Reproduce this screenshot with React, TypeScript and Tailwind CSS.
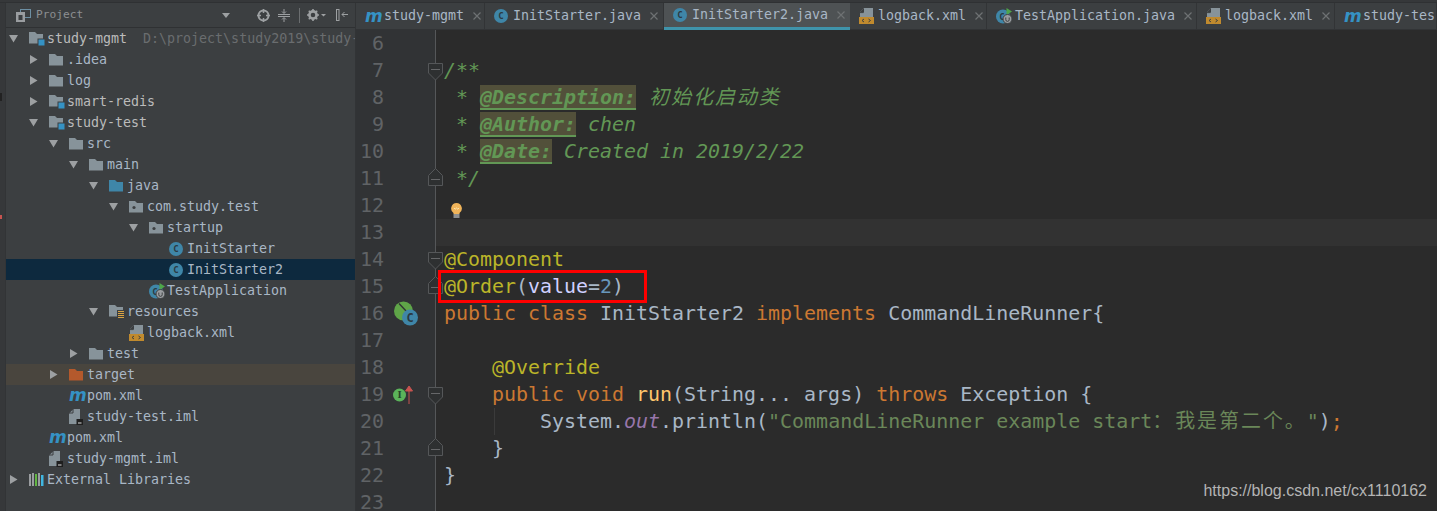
import React from "react";

const mono = "font-['DejaVu_Sans_Mono','Noto_Sans_CJK_SC',monospace]";

const Folder = ({ color = "#87939a" }: { color?: string }) => (
  <svg width="14" height="12" viewBox="0 0 14 12" className="block">
    <path d="M0 0h6l2 2h6v9.5H0z" fill={color} />
  </svg>
);

const ModuleFolder = () => (
  <svg width="16" height="15" viewBox="0 0 16 15" className="block">
    <path d="M0 1h6l2 2h6v9.5H0z" fill="#87939a" />
    <rect x="8.5" y="7.5" width="7.5" height="7.5" fill="#3c3f41" />
    <rect x="9.5" y="8.5" width="6" height="6" fill="#3592c4" />
  </svg>
);

const PackageFolder = () => (
  <svg width="14" height="12" viewBox="0 0 14 12" className="block">
    <path d="M0 0h6l2 2h6v9.5H0z" fill="#87939a" />
    <circle cx="5" cy="6.5" r="1.6" fill="#3c3f41" />
  </svg>
);

const ResourceFolder = () => (
  <svg width="16" height="15" viewBox="0 0 16 15" className="block">
    <path d="M0 1h6l2 2h6v9.5H0z" fill="#87939a" />
    <rect x="8" y="6" width="8" height="9" fill="#3c3f41" />
    <path d="M9 7.5h6M9 9.5h6M9 11.5h6M9 13.5h6" stroke="#d9a343" strokeWidth="1" />
  </svg>
);

const ClassIcon = ({ size = 14 }: { size?: number }) => (
  <svg width={size} height={size} viewBox="0 0 14 14" className="block">
    <circle cx="7" cy="7" r="7" fill="#3f86a8" />
    <text x="7" y="10.2" textAnchor="middle" fontSize="9" fontWeight="700" fontFamily="DejaVu Sans Mono" fill="#2b3a42">
      C
    </text>
  </svg>
);

const SpringIcon = () => (
  <svg width="17" height="16" viewBox="0 0 17 16" className="block">
    <circle cx="7" cy="8.5" r="7" fill="#3f86a8" />
    <text x="6" y="12" textAnchor="middle" fontSize="9" fontWeight="700" fontFamily="DejaVu Sans Mono" fill="#2b3a42">
      C
    </text>
    <path d="M10.5 0l5.5 3.5-5.5 3.5z" fill="#4ea64a" />
    <circle cx="11.5" cy="11" r="4.5" fill="#9a9da0" stroke="#3c3f41" />
    <path d="M9.8 9.5v2.2a1.7 1.7 0 0 0 3.4 0V9.5" fill="none" stroke="#3c3f41" strokeWidth="1" />
  </svg>
);

const XmlIcon = () => (
  <svg width="16" height="16" viewBox="0 0 16 16" className="block">
    <path d="M5 0h9v9H1V4z" fill="#87939a" />
    <path d="M5 0v4H1z" fill="#3c3f41" />
    <path d="M1 4.6l3.4 0V1" fill="none" stroke="#3c3f41" strokeWidth="1" />
    <rect x="0" y="9" width="15" height="7" fill="#c08a2e" />
    <path d="M5 11l-2 1.5L5 14M9.5 11l2 1.5-2 1.5" fill="none" stroke="#3c3f41" strokeWidth="1" />
  </svg>
);

const ImlIcon = () => (
  <svg width="14" height="16" viewBox="0 0 14 16" className="block">
    <path d="M4.5 0H11v15H0V4.5z" fill="#87939a" />
    <path d="M4 0v4H0" fill="none" stroke="#3c3f41" strokeWidth="1" />
    <rect x="7.5" y="10" width="6.5" height="6" fill="#1f1f1f" />
    <rect x="9" y="13.5" width="3.5" height="1" fill="#dddddd" />
  </svg>
);

const MavenIcon = () => (
  <span className="block w-[15px] text-center text-[17px] font-bold italic leading-none text-[#3592c4] font-['DejaVu_Sans',sans-serif]">
    m
  </span>
);

const LibIcon = () => (
  <svg width="15" height="13" viewBox="0 0 15 13" className="block">
    <rect x="0" y="1" width="2" height="12" fill="#9a9da0" />
    <rect x="3" y="0" width="2" height="13" fill="#9a9da0" />
    <rect x="6" y="1" width="2" height="12" fill="#62b543" />
    <rect x="9" y="0" width="2" height="13" fill="#9a9da0" />
    <rect x="12" y="2" width="2.5" height="11" fill="#40b6e0" />
  </svg>
);

const Arrow = ({ open }: { open: boolean }) => (
  <svg width="9" height="9" viewBox="0 0 9 9" className="block">
    <path d={open ? "M0 1h9L4.5 8.5z" : "M1 0l7.5 4.5L1 9z"} fill="#9da0a2" />
  </svg>
);

type TreeRow = {
  level: number;
  label: string;
  arrow?: "open" | "closed";
  icon: React.ReactNode;
  hint?: string;
  bg?: string;
  bright?: boolean;
};

const treeRows: TreeRow[] = [
  { level: 0, label: "study-mgmt", arrow: "open", icon: <ModuleFolder />, hint: "D:\\project\\study2019\\study-", bright: true },
  { level: 1, label: ".idea", arrow: "closed", icon: <Folder /> },
  { level: 1, label: "log", arrow: "closed", icon: <Folder /> },
  { level: 1, label: "smart-redis", arrow: "closed", icon: <ModuleFolder />, bright: true },
  { level: 1, label: "study-test", arrow: "open", icon: <ModuleFolder />, bright: true },
  { level: 2, label: "src", arrow: "open", icon: <Folder /> },
  { level: 3, label: "main", arrow: "open", icon: <Folder /> },
  { level: 4, label: "java", arrow: "open", icon: <Folder color="#3f86a8" /> },
  { level: 5, label: "com.study.test", arrow: "open", icon: <PackageFolder /> },
  { level: 6, label: "startup", arrow: "open", icon: <PackageFolder /> },
  { level: 7, label: "InitStarter", icon: <ClassIcon /> },
  { level: 7, label: "InitStarter2", icon: <ClassIcon />, bg: "bg-[#0d293e]" },
  { level: 6, label: "TestApplication", icon: <SpringIcon /> },
  { level: 4, label: "resources", arrow: "open", icon: <ResourceFolder /> },
  { level: 5, label: "logback.xml", icon: <XmlIcon /> },
  { level: 3, label: "test", arrow: "closed", icon: <Folder /> },
  { level: 2, label: "target", arrow: "closed", icon: <Folder color="#b4592c" />, bg: "bg-[#49453e]" },
  { level: 2, label: "pom.xml", icon: <MavenIcon /> },
  { level: 2, label: "study-test.iml", icon: <ImlIcon /> },
  { level: 1, label: "pom.xml", icon: <MavenIcon /> },
  { level: 1, label: "study-mgmt.iml", icon: <ImlIcon /> },
  { level: 0, label: "External Libraries", arrow: "closed", icon: <LibIcon /> },
];

const ProjectHeader = () => (
  <div className="flex h-[25px] items-center border-b border-[#2f3133] pl-[10px] text-[#8c8f91]">
    <svg width="15" height="13" viewBox="0 0 15 13" className="block">
      <rect x="4.5" y="0.5" width="10" height="8" fill="none" stroke="#6d8fa3" />
      <rect x="0" y="3" width="9" height="10" fill="#9a9da0" />
      <rect x="2.5" y="6" width="4" height="5" fill="#3c3f41" />
    </svg>
    <span className={`ml-[5px] text-[11.2px] ${mono}`}>Project</span>
    <svg width="8" height="5" viewBox="0 0 8 5" className="ml-[139px] block">
      <path d="M0 0h8L4 5z" fill="#9da0a2" />
    </svg>
    <svg width="13" height="13" viewBox="0 0 13 13" className="ml-[27px] block">
      <circle cx="6.5" cy="6.5" r="5" fill="none" stroke="#9da0a2" strokeWidth="2" />
      <path d="M6.5 0v4M6.5 9v4M0 6.5h4M9 6.5h4" stroke="#9da0a2" strokeWidth="1.5" />
    </svg>
    <svg width="12" height="13" viewBox="0 0 12 13" className="ml-[8px] block">
      <path d="M0 5.5h12M0 7.5h12" stroke="#9da0a2" />
      <path d="M6 0v4M4 2.5L6 4.5 8 2.5M6 13V9M4 10.5L6 8.5 8 10.5" fill="none" stroke="#9da0a2" />
    </svg>
    <span className="ml-[9px] h-[15px] w-px bg-[#6b6e70]" />
    <svg width="20" height="12" viewBox="0 0 20 12" className="ml-[7px] block">
      <circle cx="6" cy="6" r="3.6" fill="none" stroke="#9da0a2" strokeWidth="2.6" />
      <path d="M6 0v2M6 10v2M0 6h2M10 6h2M1.8 1.8l1.4 1.4M8.8 8.8l1.4 1.4M1.8 10.2l1.4-1.4M8.8 3.2l1.4-1.4" stroke="#9da0a2" strokeWidth="1.6" />
      <path d="M14 5h5l-2.5 2.5z" fill="#9da0a2" />
    </svg>
    <svg width="12" height="12" viewBox="0 0 12 12" className="ml-[9px] block">
      <rect x="0.5" y="0.5" width="2.5" height="11" fill="none" stroke="#9da0a2" />
      <path d="M12 5.5H6M8.5 3L6 5.5 8.5 8" fill="none" stroke="#9da0a2" />
    </svg>
  </div>
);

const ProjectTree = () => (
  <div className={`text-[13.3px] text-[#a9b7c6] ${mono}`}>
    {treeRows.map((row, i) => (
      <div
        key={i}
        className={`flex h-[21px] items-center overflow-hidden whitespace-nowrap ${row.bg ?? ""}`}
        style={{ paddingLeft: 3 + row.level * 20 }}
      >
        <span className="flex w-[20px] shrink-0 items-center">
          {row.arrow ? <Arrow open={row.arrow === "open"} /> : null}
        </span>
        <span className="flex w-[18px] shrink-0 items-center">{row.icon}</span>
        <span className={row.bright ? "text-[#bbbbbb]" : ""}>{row.label}</span>
        {row.hint ? <span className="ml-[16px] text-[#6a6d6f]">{row.hint}</span> : null}
      </div>
    ))}
  </div>
);

type Tab = { label: string; icon: React.ReactNode; width: string; active?: boolean };

const tabs: Tab[] = [
  { label: "study-mgmt", icon: <MavenIcon />, width: "w-[129px]" },
  { label: "InitStarter.java", icon: <ClassIcon />, width: "w-[179px]" },
  { label: "InitStarter2.java", icon: <ClassIcon />, width: "w-[186px]", active: true },
  { label: "logback.xml", icon: <XmlIcon />, width: "w-[137px]" },
  { label: "TestApplication.java", icon: <SpringIcon />, width: "w-[210px]" },
  { label: "logback.xml", icon: <XmlIcon />, width: "w-[138px]" },
  { label: "study-tes", icon: <MavenIcon />, width: "w-[102px]" },
];

const CloseX = () => (
  <svg width="8" height="8" viewBox="0 0 8 8" className="ml-[7px] block shrink-0">
    <path d="M0.5 0.5l7 7M7.5 0.5l-7 7" stroke="#6e7173" strokeWidth="1.2" />
  </svg>
);

const TabBar = () => (
  <div className={`flex h-[27px] overflow-hidden text-[13.3px] text-[#a9b7c6] ${mono}`}>
    {tabs.map((tab, i) => (
      <div
        key={i}
        className={`flex h-full shrink-0 items-center gap-[2px] overflow-hidden pl-[9px] ${tab.width} ${
          tab.active
            ? "border-b-[3px] border-[#3f94ab] bg-[#4e5254]"
            : "border-b border-r border-[#323436] bg-[#3c3f41]"
        }`}
      >
        <span className="flex w-[17px] shrink-0 items-center">{tab.icon}</span>
        <span className="whitespace-nowrap">{tab.label}</span>
        {i < tabs.length - 1 ? <CloseX /> : null}
      </div>
    ))}
  </div>
);

const FoldMarker = ({ dir, top }: { dir: "down" | "up"; top: string }) => (
  <svg width="15" height="18" viewBox="0 0 15 18" className={`absolute left-[72px] ${top}`}>
    <path
      d={dir === "down" ? "M0.5 0.5h14v9.5l-7 7-7-7z" : "M7.5 0.5l7 7v10h-14v-10z"}
      fill="#2e3031"
      stroke="#555759"
    />
    <path d={dir === "down" ? "M3 6.5h9" : "M3 11.5h9"} stroke="#666769" />
  </svg>
);

const BeanIcon = () => (
  <svg width="26" height="26" viewBox="0 0 26 26" className="block overflow-visible">
    <circle cx="10.5" cy="10" r="9.5" fill="#5fa548" />
    <path d="M6 2.5l8 8.5-1 8" fill="none" stroke="#313335" strokeWidth="1.4" />
    <circle cx="17" cy="16.5" r="8" fill="#3f86a8" />
    <text x="17" y="21" textAnchor="middle" fontSize="12" fontWeight="700" fontFamily="DejaVu Sans Mono" fill="#2b3a42">
      C
    </text>
  </svg>
);

const OverrideIcon = () => (
  <svg width="21" height="19" viewBox="0 0 21 19" className="block">
    <circle cx="6.5" cy="10" r="6.5" fill="#5bb35a" />
    <text x="6.5" y="13.2" textAnchor="middle" fontSize="9" fontWeight="700" fontFamily="DejaVu Serif" fill="#24452a">
      I
    </text>
    <path d="M16 19V2M12.5 6L16 1l3.5 5z" fill="#c75450" stroke="#c75450" />
  </svg>
);

const Bulb = () => (
  <svg width="11" height="15" viewBox="0 0 11 15" className="block">
    <path d="M5.5 0a5.5 5.5 0 0 1 3 10v1h-6v-1a5.5 5.5 0 0 1 3-10z" fill="#f0b45a" />
    <path d="M3 5l1.2 1.2L5.5 5l1.3 1.2L8 5" fill="none" stroke="#fff2c8" strokeWidth="0.8" />
    <rect x="2.5" y="11" width="6" height="4" fill="#8d8f90" />
  </svg>
);

const C = {
  comment: "text-[#629755] italic",
  ann: "text-[#bbb529]",
  kw: "text-[#cc7832]",
  txt: "text-[#a9b7c6]",
  str: "text-[#6a8759]",
};

const Tag = ({ children }: { children: React.ReactNode }) => (
  <span className="bg-[#52503a] font-bold underline decoration-2 underline-offset-[4px] decoration-[#629755]">{children}</span>
);

type Line = {
  n: number;
  code?: React.ReactNode;
  fold?: React.ReactNode;
  icon?: React.ReactNode;
  current?: boolean;
};

const lines: Line[] = [
  { n: 6 },
  {
    n: 7,
    fold: <FoldMarker dir="down" top="top-[6px]" />,
    code: <span className={C.comment}>/**</span>,
  },
  {
    n: 8,
    code: (
      <span className={C.comment}>
        {" * "}
        <Tag>@Description:</Tag> <span className="ml-[1px] tracking-[2px]">初始化启动类</span>
      </span>
    ),
  },
  {
    n: 9,
    code: (
      <span className={C.comment}>
        {" * "}
        <Tag>@Author:</Tag> chen
      </span>
    ),
  },
  {
    n: 10,
    code: (
      <span className={C.comment}>
        {" * "}
        <Tag>@Date:</Tag> Created in 2019/2/22
      </span>
    ),
  },
  {
    n: 11,
    fold: <FoldMarker dir="up" top="top-[3px]" />,
    code: <span className={C.comment}>{" */"}</span>,
  },
  {
    n: 12,
    code: (
      <span className="flex h-full items-start pl-[7px] pt-[11px]">
        <Bulb />
      </span>
    ),
  },
  { n: 13, current: true },
  {
    n: 14,
    fold: <FoldMarker dir="down" top="top-[6px]" />,
    code: <span className={C.ann}>@Component</span>,
  },
  {
    n: 15,
    fold: <FoldMarker dir="up" top="top-[3px]" />,
    code: (
      <>
        <span className={C.ann}>@Order</span>
        <span className={C.txt}>(</span>
        <span className="text-[#d0d0ff]">value</span>
        <span className={C.txt}>=</span>
        <span className="text-[#6897bb]">2</span>
        <span className={C.txt}>)</span>
        <span className="absolute left-[2px] top-[-3px] h-[33px] w-[209px] border-[3px] border-[#ff0000]" />
      </>
    ),
  },
  {
    n: 16,
    icon: <BeanIcon />,
    code: (
      <>
        <span className={C.kw}>public class </span>
        <span className={C.txt}>InitStarter2 </span>
        <span className={C.kw}>implements </span>
        <span className={C.txt}>{"CommandLineRunner{"}</span>
      </>
    ),
  },
  { n: 17 },
  { n: 18, code: <span className={C.ann}>{"    @Override"}</span> },
  {
    n: 19,
    icon: <OverrideIcon />,
    fold: <FoldMarker dir="down" top="top-[6px]" />,
    code: (
      <>
        <span className={C.kw}>{"    public void "}</span>
        <span className="text-[#ffc66d]">run</span>
        <span className={C.txt}>(String... args) </span>
        <span className={C.kw}>throws </span>
        <span className={C.txt}>{"Exception {"}</span>
      </>
    ),
  },
  {
    n: 20,
    code: (
      <>
        <span className={C.txt}>{"        System."}</span>
        <span className="italic text-[#9876aa]">out</span>
        <span className={C.txt}>.println(</span>
        <span className={C.str}>
          "CommandLineRunner example start<span className="tracking-[3px]">：</span>
          <span className="tracking-[2px]">我是第二个。</span>"
        </span>
        <span className={C.txt}>)</span>
        <span className={C.kw}>;</span>
        <span className="absolute left-[58px] top-0 h-full w-px bg-[#3b3b3b]" />
      </>
    ),
  },
  {
    n: 21,
    fold: <FoldMarker dir="up" top="top-[3px]" />,
    code: <span className={C.txt}>{"    }"}</span>,
  },
  { n: 22, code: <span className={C.txt}>{"}"}</span> },
  { n: 23 },
];

const Editor = () => (
  <div className={`flex-1 overflow-hidden bg-[#2b2b2b] text-[19.95px] leading-[27px] ${mono}`}>
    {lines.map((line) => (
      <div key={line.n} className="relative flex h-[27px]">
        <div className="flex w-[80px] shrink-0 border-r border-[#555759] bg-[#313335]">
          <span className="w-[28px] text-right text-[#606366]">{line.n}</span>
          <span className="flex w-[34px] items-center pl-[9px]">{line.icon}</span>
        </div>
        {line.fold}
        <div className={`relative flex-1 whitespace-pre pl-[8px] ${line.current ? "bg-[#323232]" : ""}`}>
          {line.code}
        </div>
      </div>
    ))}
  </div>
);

const App = () => {
  return (
    <div className="relative flex h-[511px] w-[1437px] flex-col overflow-hidden bg-[#3c3f41]">
      <div className="h-[3px] shrink-0 border-b border-[#2f3133] bg-[#36383a]" />
      <div className="flex min-h-0 flex-1">
        <div className="relative w-[6px] shrink-0 border-r border-[#323436] bg-[#36383a]">
          <span className="absolute left-0 top-[90px] h-[8px] w-[2px] bg-[#222222]" />
          <span className="absolute left-0 top-[212px] h-[4px] w-[2px] bg-[#c75450]" />
        </div>
        <div className="w-[350px] shrink-0 border-r border-[#323436] bg-[#3c3f41]">
          <ProjectHeader />
          <ProjectTree />
        </div>
        <div className="flex min-w-0 flex-1 flex-col">
          <TabBar />
          <Editor />
        </div>
      </div>
      <span className="absolute bottom-[10px] right-[10px] font-['Liberation_Sans',sans-serif] text-[16px] leading-[20px] text-[#b4b4b4]">
        https://blog.csdn.net/cx1110162
      </span>
    </div>
  );
};

export default App;
